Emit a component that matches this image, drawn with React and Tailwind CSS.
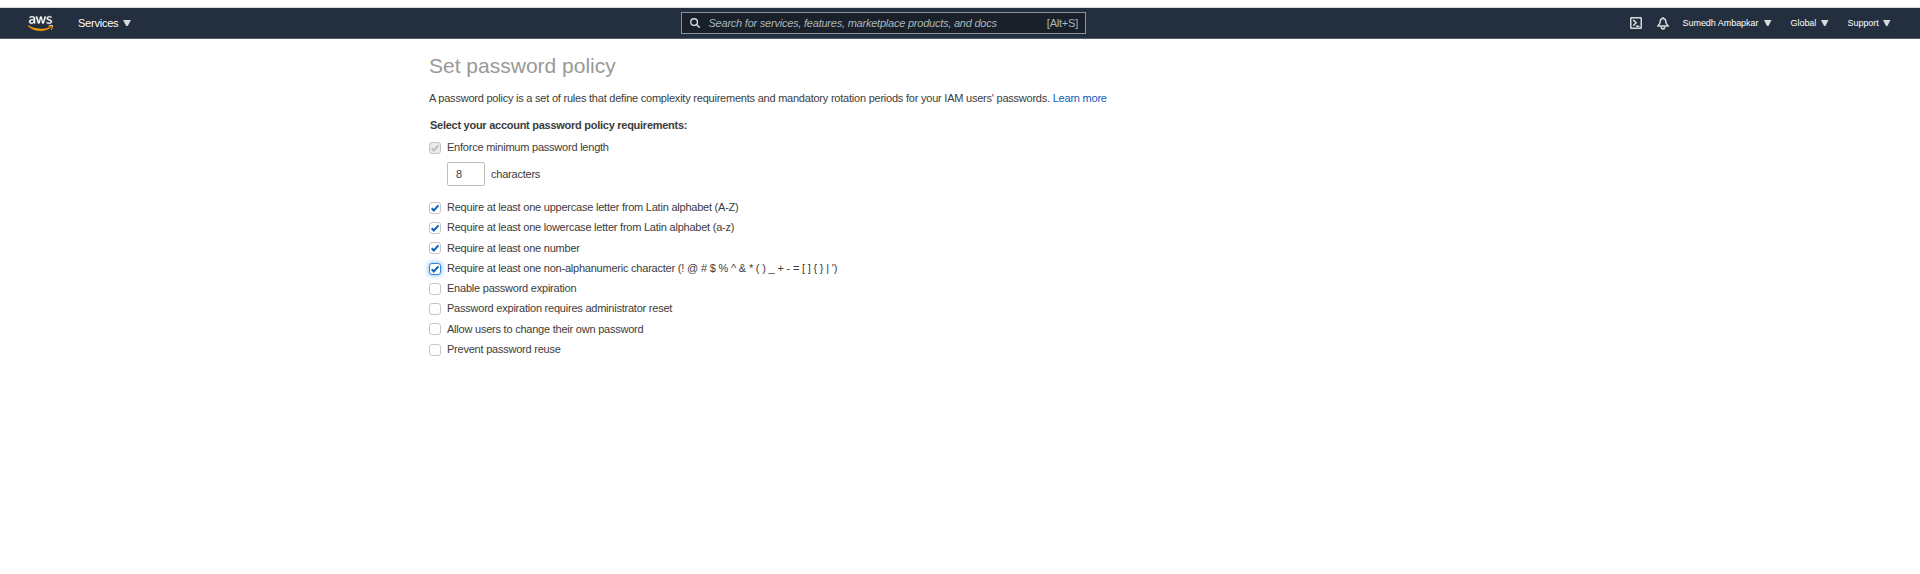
import { FaAws } from "react-icons/fa";

function Caret({ className }) {
  return (
    <svg viewBox="0 0 8 6" className={className} fill="#d5dbdb" preserveAspectRatio="none">
      <path d="M0 0h8L4.700 6H3.300z" />
    </svg>
  );
}

function Logo() {
  return (
    <>
      <svg className="absolute size-0" aria-hidden="true">
        <linearGradient id="logo-fill" gradientUnits="userSpaceOnUse" x1="0" y1="0" x2="0" y2="512">
          <stop offset="0.622" stopColor="#fff" />
          <stop offset="0.622" stopColor="#ff9900" />
        </linearGradient>
      </svg>
      <FaAws
        className="h-[17px] w-[25px] shrink-0"
        viewBox="0 32 640 448"
        preserveAspectRatio="none"
        stroke="url(#logo-fill)"
        strokeWidth="8"
        style={{ fill: "url(#logo-fill)" }}
      />
    </>
  );
}

function SearchIcon() {
  return (
    <svg viewBox="0 0 11 11" className="size-[10px] shrink-0" fill="none" stroke="#d5dbdb" strokeWidth="1.5">
      <circle cx="4.5" cy="4.5" r="3.700" />
      <path d="M7.200 7.200l3 3" strokeWidth="1.800" strokeLinecap="round" />
    </svg>
  );
}

function TerminalIcon() {
  return (
    <svg viewBox="0 0 12 12" className="size-[12px] shrink-0" fill="none" stroke="#d5dbdb" strokeWidth="1.5">
      <rect x="0.75" y="0.75" width="10.5" height="10.5" rx="0.6" />
      <path d="M3.200 2.900l3 2.900-3 3M6 9.200h3.400" />
    </svg>
  );
}

function BellIcon() {
  return (
    <svg viewBox="0 0 12 13" className="h-[13px] w-[12px] shrink-0" fill="none" stroke="#d5dbdb" strokeWidth="1.5" strokeLinejoin="round">
      <path d="M6 0v1.500M3.200 4.800C3.200 2.800 4.300 1.600 6 1.600s2.800 1.200 2.800 3.200c0 1.800.8 2.700 2.500 4.200H.7C2.400 7.500 3.200 6.600 3.200 4.800z" />
      <path d="M4.300 9.500c0 1.700.7 2.500 1.700 2.500s1.700-.8 1.700-2.500" />
    </svg>
  );
}

function Checkbox({ checked, disabled, focused }) {
  const look = disabled
    ? "border-[#c4c4c4] bg-[#ebebeb]"
    : focused
      ? "border-[#3184db] bg-white shadow-[0_0_5px_1px_#9ccaf5]"
      : "border-[#c6c6c6] bg-white";
  return (
    <span className={`flex size-[12px] shrink-0 items-center justify-center rounded-[3px] border ${look}`}>
      {checked && (
        <svg viewBox="0 0 8 8" className="size-[8px]" fill="none" stroke={disabled ? "#bdbdbd" : "#0f62b8"} strokeWidth="2">
          <path d="M.6 4.300l2.200 2.200L7.500 1.300" />
        </svg>
      )}
    </span>
  );
}

function Option({ label, symbols, ...box }) {
  return (
    <label className="flex h-[20.25px] items-center gap-[6px]">
      <Checkbox {...box} />
      <span className="-mt-[1.500px] whitespace-nowrap">
        {label}
        {symbols && <span className="tracking-[-0.18px]"> {symbols}</span>}
      </span>
    </label>
  );
}

const options = [
  { label: "Require at least one uppercase letter from Latin alphabet (A-Z)", checked: true },
  { label: "Require at least one lowercase letter from Latin alphabet (a-z)", checked: true },
  { label: "Require at least one number", checked: true },
  {
    label: "Require at least one non-alphanumeric character",
    symbols: "(! @ # $ % ^ & * ( ) _ + - = [ ] { } | ')",
    checked: true,
    focused: true,
  },
  { label: "Enable password expiration" },
  { label: "Password expiration requires administrator reset" },
  { label: "Allow users to change their own password" },
  { label: "Prevent password reuse" },
];

export default function App() {
  return (
    <div className="h-[574px] overflow-hidden bg-white pt-[7px] font-['Liberation_Sans',Arial,sans-serif] text-[11px] leading-[14px] tracking-[-0.225px] text-[#3c3c3c]">
      <header className="flex h-[32px] items-center border-t border-b border-t-[#d5dbdb] border-b-[#545e6b] bg-[#232f3e] text-white">
        <div className="flex w-[681px] items-center pl-[27.5px]">
          <Logo />
          <span className="ml-[25.5px]">Services</span>
          <Caret className="ml-[5px] h-[6px] w-[8px]" />
        </div>
        <div className="flex h-[22px] w-[405px] items-center border border-[#879596] bg-[#1a2029] pr-[7px] pl-[8px] text-[#aab7b8]">
          <SearchIcon />
          <span className="ml-[8.500px] flex-1 italic">Search for services, features, marketplace products, and docs</span>
          <span>[Alt+S]</span>
        </div>
        <nav className="flex flex-1 items-center pl-[544px] text-[9px] tracking-[-0.04px]">
          <TerminalIcon />
          <span className="ml-[15px]"><BellIcon /></span>
          <span className="ml-[13.500px] w-[81.500px] whitespace-nowrap">Sumedh Ambapkar</span>
          <Caret className="h-[6px] w-[7.500px]" />
          <span className="ml-[19px] w-[30.500px]">Global</span>
          <Caret className="h-[6px] w-[7.500px]" />
          <span className="ml-[19px] w-[35.500px]">Support</span>
          <Caret className="h-[6px] w-[7.500px]" />
        </nav>
      </header>

      <main className="pl-[429px]">
        <h1 className="pt-[15px] text-[21px] leading-[24px] tracking-[0px] text-[#999]">Set password policy</h1>
        <p className="mt-[13px]">
          A password policy is a set of rules that define complexity requirements and mandatory rotation periods for your IAM users' passwords.{" "}
          <a className="text-[#0f5cb5]">Learn more</a>
        </p>
        <h2 className="mt-[13px] pl-[1px] font-bold tracking-[-0.265px]">Select your account password policy requirements:</h2>
        <div className="mt-[6px]">
          <Option label="Enforce minimum password length" checked disabled />
        </div>
        <div className="mt-[4px] ml-[18px] flex items-center gap-[6px]">
          <span className="flex h-[24px] w-[38px] items-center rounded-[2px] border border-[#bfbfbf] pl-[8px]">8</span>
          <span>characters</span>
        </div>
        <div className="mt-[11.500px]">
          {options.map((option) => (
            <Option key={option.label} {...option} />
          ))}
        </div>
      </main>
    </div>
  );
}
